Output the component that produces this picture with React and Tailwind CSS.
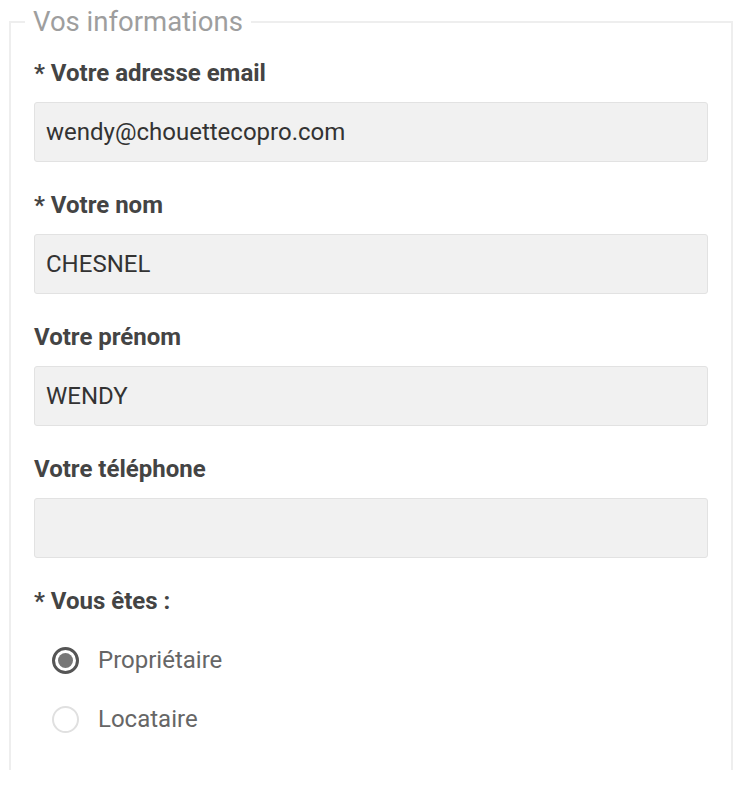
import React, { useState } from "react";

const fields = [
  { label: "* Votre adresse email", value: "wendy@chouettecopro.com" },
  { label: "* Votre nom", value: "CHESNEL" },
  { label: "Votre prénom", value: "WENDY" },
  { label: "Votre téléphone", value: "" },
];

function Radio({ checked, label, onClick }) {
  return (
    <div className="flex items-center h-[40px] cursor-pointer" onClick={onClick}>
      {checked ? (
        <span className="w-[27px] h-[27px] rounded-full border-[3px] border-[#555] flex items-center justify-center">
          <span className="w-[15px] h-[15px] rounded-full bg-[#777]"></span>
        </span>
      ) : (
        <span className="w-[27px] h-[27px] rounded-full border-2 border-[#e0e0e0]"></span>
      )}
      <span className="ml-[19px] text-[24px] text-[#666]">{label}</span>
    </div>
  );
}

export default function App() {
  const [status, setStatus] = useState("Propriétaire");

  return (
    <div
      className="w-[743px] h-[793px] bg-white overflow-hidden"
      style={{ fontFamily: "Roboto, 'Noto Sans', sans-serif" }}
    >
      <fieldset className="ml-[9px] w-[724px] h-[770px] border-2 border-b-0 border-[#eeeeee] pl-[14px] pr-[23px]">
        <legend className="px-[8px] text-[27.5px] leading-[44px] text-[#9e9e9e]">
          Vos informations
        </legend>
        <div className="pl-[9px] pt-[17px]">
          {fields.map((f) => (
            <div key={f.label}>
              <div className="h-[24px] leading-[24px] text-[24px] font-bold text-[#444]">
                {f.label}
              </div>
              <input
                readOnly
                value={f.value}
                className="mt-[17px] mb-[31px] block w-full h-[60px] px-[11px] bg-[#f1f1f1] border border-[#e2e2e2] rounded-[3px] text-[24px] text-[#333] outline-none"
              />
            </div>
          ))}
          <div className="h-[24px] leading-[24px] text-[24px] font-bold text-[#444]">
            * Vous êtes :
          </div>
          <div className="mt-[27px] pl-[18px] flex flex-col gap-[19px]">
            <Radio
              checked={status === "Propriétaire"}
              label="Propriétaire"
              onClick={() => setStatus("Propriétaire")}
            />
            <Radio
              checked={status === "Locataire"}
              label="Locataire"
              onClick={() => setStatus("Locataire")}
            />
          </div>
        </div>
      </fieldset>
    </div>
  );
}
